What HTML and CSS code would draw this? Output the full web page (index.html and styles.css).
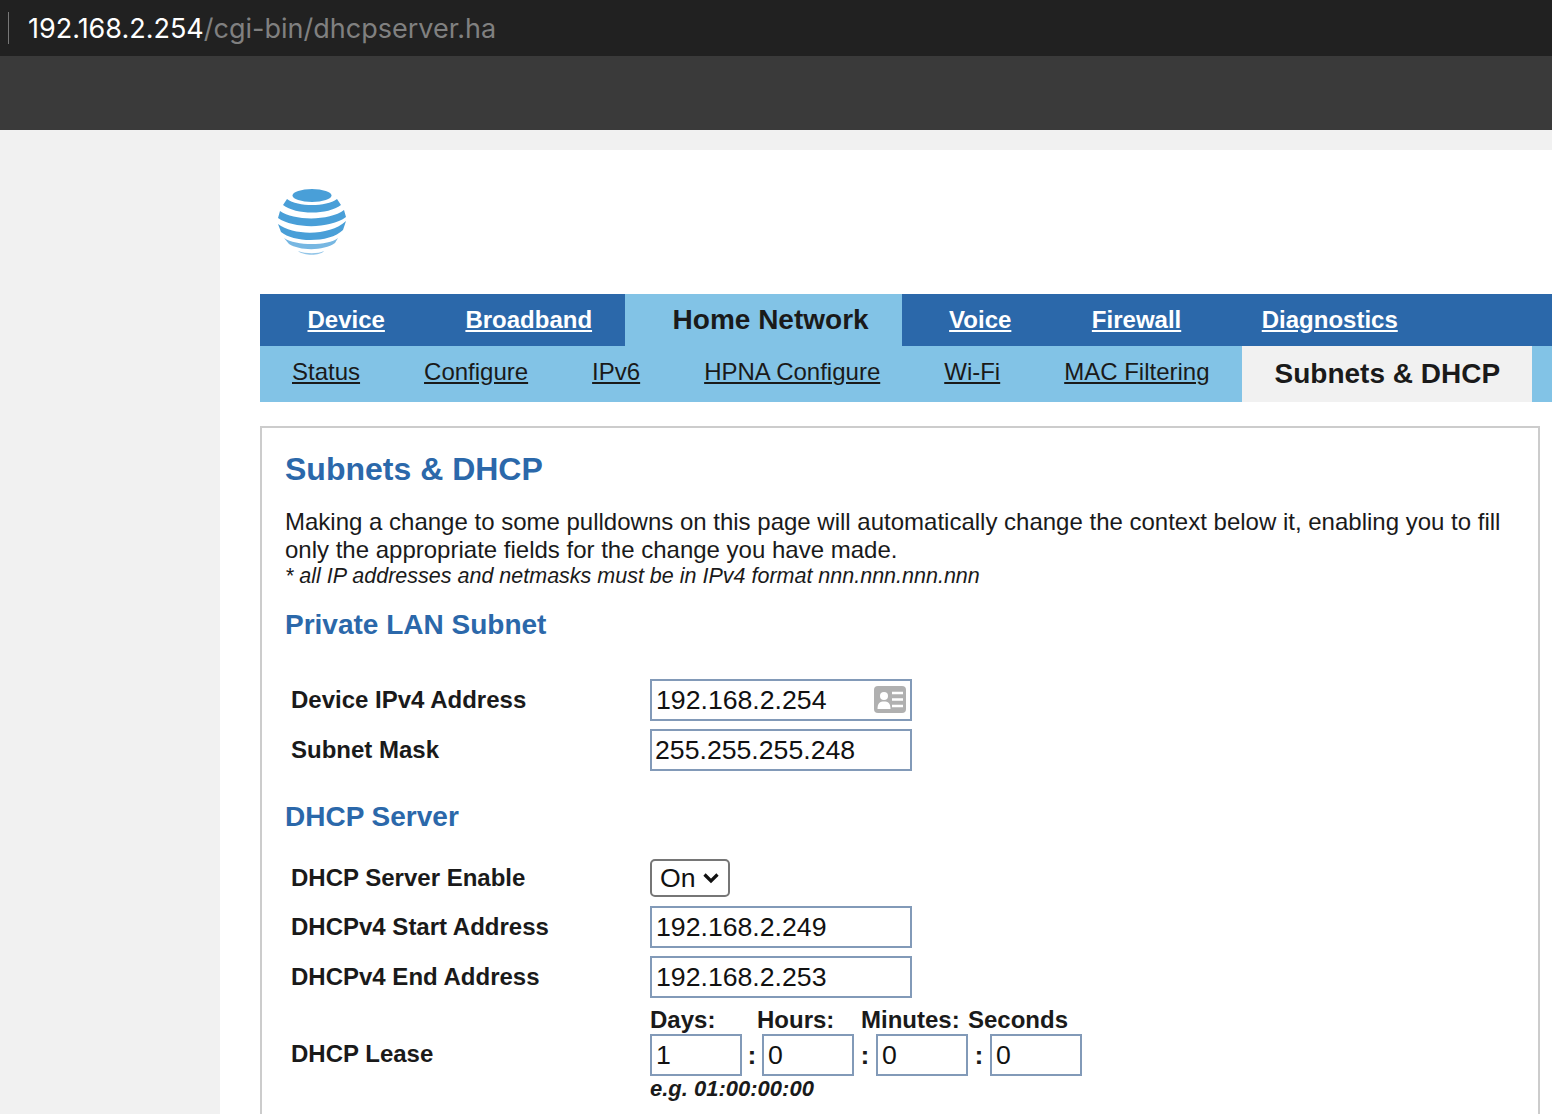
FILE: index.html
```html
<!DOCTYPE html>
<html lang="en">
<head>
    <meta charset="UTF-8">
    <title>Subnets &amp; DHCP</title>
    <link rel="stylesheet" href="styles.css">
</head>
<body>
<div class="url-bar">
    <span class="url-caret"></span>
    <span class="url-host">192.168.2.254</span><span class="url-path">/cgi-bin/dhcpserver.ha</span>
</div>
<div class="tool-bar"></div>
<div class="page">
    <div class="logo">
        <svg width="68" height="68" viewBox="0 0 68 68">
            <defs>
                <filter id="soft"><feGaussianBlur stdDeviation="0.5"/></filter>
            </defs>
            <g fill="#4a9fd8" filter="url(#soft)">
                <ellipse cx="34" cy="7.5" rx="19.5" ry="6.5"/>
                <path d="M9 11 C20 19 48 19 59 11 L63 17 C50 27 18 27 5 17 Z"/>
                <path d="M2 23 C16 33 52 33 66 22 L68 29 C52 41 16 41 0 30 Z"/>
                <path d="M0 36 C16 48 52 48 68 33 L65 42 C52 55 16 55 3 44 Z"/>
                <path d="M6 50 C18 58 50 58 60 50 L57 55 C46 63 22 63 11 56 Z" opacity="0.75"/>
                <path d="M20 63 C28 66 40 66 46 63 C42 68 26 68 20 63 Z" opacity="0.6"/>
            </g>
        </svg>
    </div>
    <ul class="nav-main">
        <li><a href="#">Device</a></li>
        <li><a href="#">Broadband</a></li>
        <li class="active">Home Network</li>
        <li><a href="#">Voice</a></li>
        <li><a href="#">Firewall</a></li>
        <li><a href="#">Diagnostics</a></li>
    </ul>
    <ul class="nav-sub">
        <li><a href="#">Status</a></li>
        <li><a href="#">Configure</a></li>
        <li><a href="#">IPv6</a></li>
        <li><a href="#">HPNA Configure</a></li>
        <li><a href="#">Wi-Fi</a></li>
        <li><a href="#">MAC Filtering</a></li>
        <li class="active">Subnets &amp; DHCP</li>
    </ul>
    <div class="content">
        <h1>Subnets &amp; DHCP</h1>
        <p class="intro">Making a change to some pulldowns on this page will automatically change the context below it, enabling you to fill only the appropriate fields for the change you have made.</p>
        <p class="note">* all IP addresses and netmasks must be in IPv4 format nnn.nnn.nnn.nnn</p>

        <h2>Private LAN Subnet</h2>
        <div class="form-group lan">
            <div class="row">
                <label>Device IPv4 Address</label>
                <div class="field">
                    <input class="text" value="192.168.2.254">
                    <svg class="card-icon" width="32" height="27" viewBox="0 0 32 27">
                        <rect width="32" height="27" rx="4" fill="#b0b0b0"/>
                        <circle cx="10" cy="10" r="4" fill="#fff"/>
                        <path d="M3.5 23 C3.5 17 6 15.5 10 15.5 C14 15.5 16.5 17 16.5 23 Z" fill="#fff"/>
                        <path d="M18 7 H29 M18 13.5 H29 M18 20 H29" stroke="#fff" stroke-width="2.5"/>
                    </svg>
                </div>
            </div>
            <div class="row">
                <label>Subnet Mask</label>
                <div class="field"><input class="text tight" value="255.255.255.248"></div>
            </div>
        </div>

        <h2>DHCP Server</h2>
        <div class="form-group dhcp">
            <div class="row select-row">
                <label>DHCP Server Enable</label>
                <div class="field select-wrap">
                    <select class="select"><option>On</option><option>Off</option></select>
                    <svg class="chevron" width="18" height="12" viewBox="0 0 18 12">
                        <path d="M2.5 2.5 L9 9 L15.5 2.5" fill="none" stroke="#111" stroke-width="3.2"/>
                    </svg>
                </div>
            </div>
            <div class="row">
                <label>DHCPv4 Start Address</label>
                <div class="field"><input class="text" value="192.168.2.249"></div>
            </div>
            <div class="row">
                <label>DHCPv4 End Address</label>
                <div class="field"><input class="text" value="192.168.2.253"></div>
            </div>
            <div class="row lease-row">
                <label>DHCP Lease</label>
                <div class="lease">
                    <div class="lease-head">
                        <span class="h-days">Days:</span>
                        <span class="h-hours">Hours:</span>
                        <span class="h-mins">Minutes:</span>
                        <span>Seconds</span>
                    </div>
                    <div class="lease-inputs">
                        <input class="text short" value="1"><span class="colon">:</span>
                        <input class="text short" value="0"><span class="colon">:</span>
                        <input class="text short" value="0"><span class="colon">:</span>
                        <input class="text short" value="0">
                    </div>
                    <div class="lease-hint">e.g. 01:00:00:00</div>
                </div>
            </div>
        </div>
    </div>
</div>
</body>
</html>
```

FILE: styles.css
```css
html, body {
    height: 1114px;
    overflow: hidden;
}

body {
    margin: 0;
    background: #f1f1f1;
    color: #1a1a1a;
    font-family: "Liberation Sans", Arial, sans-serif;
    font-size: 24px;
}

.url-bar {
    height: 56px;
    background: #212121;
    display: flex;
    align-items: center;
    font-family: Inter, sans-serif;
    font-size: 27px;
    padding-left: 8px;
}

.url-caret {
    width: 1px;
    height: 32px;
    background: #777;
    margin-right: 19px;
}

.url-host {
    color: #fff;
}

.url-path {
    color: #808080;
}

.tool-bar {
    height: 74px;
    background: #3a3a3a;
}

.page {
    margin: 20px 0 0 220px;
    background: #fff;
    padding: 38px 12px 0 40px;
    height: 1000px;
}

.logo {
    margin-left: 18px;
    height: 106px;
}

.logo svg {
    display: block;
}

.nav-main,
.nav-sub {
    list-style: none;
    margin: 0;
    padding: 0;
    display: flex;
    margin-right: -12px;
}

.nav-main {
    height: 52px;
    background: #2b68aa;
    font-weight: bold;
    line-height: 52px;
}

.nav-main li {
    padding: 0 33px 0 47.5px;
}

.nav-main a {
    color: #fff;
}

.nav-main .active {
    background: #82c3e6;
    font-size: 28px;
}

.nav-sub {
    height: 56px;
    background: #82c3e6;
    line-height: 52px;
}

.nav-sub li {
    padding: 0 32px;
}

.nav-sub a {
    color: #1a1a1a;
}

.nav-sub .active {
    background: #f1f1f1;
    font-size: 28px;
    font-weight: bold;
    line-height: 56px;
    padding: 0 32px 0 33px;
}

.content {
    margin-top: 24px;
    border: 2px solid #ccc;
    padding: 22px 23px 0;
    height: 800px;
}

h1 {
    margin: 0;
    color: #2b68aa;
    font-size: 32px;
    line-height: 38px;
}

h2 {
    margin: 0;
    color: #2b68aa;
    font-size: 28px;
    line-height: 32px;
}

.intro {
    margin: 20px 0 0;
    line-height: 28px;
}

.note {
    margin: 0 0 20px;
    font-size: 21.5px;
    font-style: italic;
    line-height: 25px;
}

.form-group {
    padding-left: 6px;
}

.form-group.lan {
    margin-top: 38px;
    margin-bottom: 30px;
}

.form-group.dhcp {
    margin-top: 26px;
}

.row {
    display: flex;
    align-items: center;
    margin-bottom: 8px;
    font-weight: bold;
}

.row label {
    width: 359px;
    flex: none;
}

.select-row {
    margin-bottom: 9px;
}

.lease-row {
    margin-top: 6px;
    margin-bottom: 0;
}

.field {
    position: relative;
}

.text {
    display: block;
    box-sizing: border-box;
    width: 262px;
    height: 42px;
    border: 2px solid #829ab8;
    border-radius: 0;
    padding: 0 4px;
    background: #fff;
    color: #111;
    font-family: inherit;
    font-size: 26.67px;
    outline: none;
}

.text.tight {
    padding-left: 3px;
}

.text.short {
    width: 92px;
}

.card-icon {
    position: absolute;
    top: 7px;
    right: 6px;
}

.select {
    display: block;
    box-sizing: border-box;
    width: 80px;
    height: 38px;
    border: 2px solid #767676;
    border-radius: 5px;
    padding: 0 0 0 8px;
    background: #fff;
    color: #111;
    font-family: inherit;
    font-size: 26.67px;
    appearance: none;
    outline: none;
}

.chevron {
    position: absolute;
    top: 13px;
    left: 52px;
    pointer-events: none;
}

.lease-head {
    display: flex;
    line-height: 28px;
}

.lease-head span {
    flex: none;
}

.h-days {
    width: 107px;
}

.h-hours {
    width: 104px;
}

.h-mins {
    width: 107px;
}

.lease-inputs {
    display: flex;
    align-items: center;
}

.colon {
    width: 20px;
    text-align: center;
    font-size: 26.67px;
}

.colon:nth-of-type(n+2) {
    width: 22px;
}

.lease-hint {
    font-size: 22px;
    font-style: italic;
    line-height: 26px;
}
```
